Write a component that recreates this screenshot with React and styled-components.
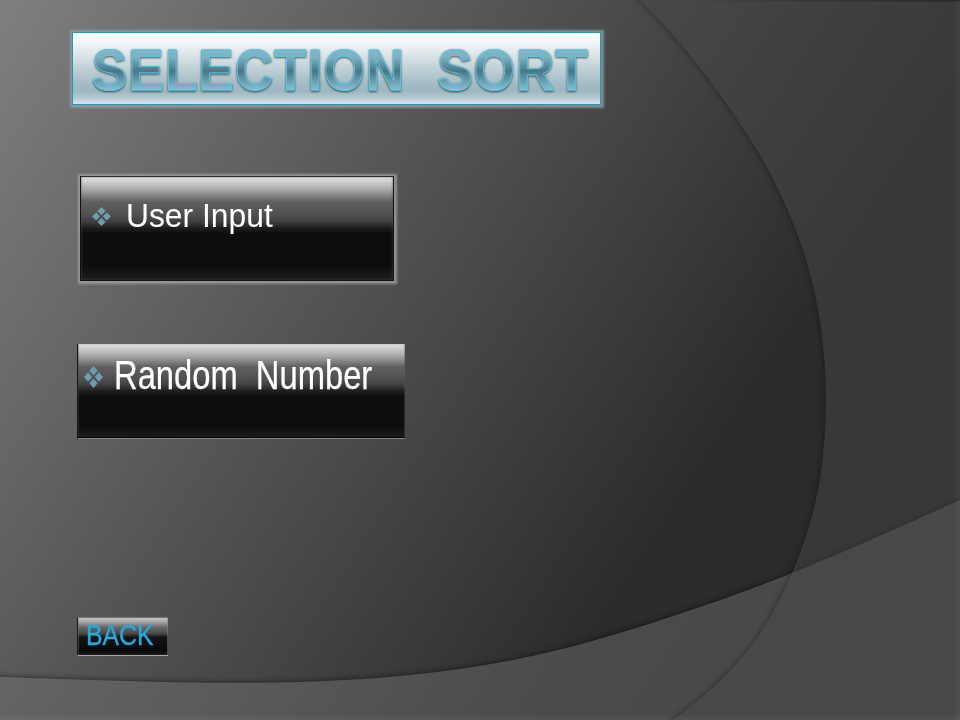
import React from 'react';
import styled, { createGlobalStyle } from 'styled-components';

const GlobalStyle = createGlobalStyle`
  body { margin: 0; background: #2b2b2b; }
`;

const Slide = styled.main`
  position: relative;
  box-sizing: border-box;
  width: 960px;
  height: 720px;
  padding: 32px 0 0 72px;
  overflow: hidden;
  display: flex;
  flex-direction: column;
  align-items: flex-start;
  font-family: 'Liberation Sans', Arial, sans-serif;
  background: linear-gradient(123deg, #7f7f7f 0%, #555555 35%, #2b2b2b 71%, #2a2a2a 100%);
`;

const Backdrop = styled.svg`
  position: absolute;
  inset: 0;
  width: 960px;
  height: 720px;
`;

const TitleBox = styled.header`
  position: relative;
  box-sizing: border-box;
  width: 529px;
  height: 73px;
  padding: 8px 0 0 19px;
  border: 1px solid #1f97be;
  background: linear-gradient(#ffffff 0%, #f6f9fa 10%, #dde6e9 30%, #b9ccd2 55%, #a2bbc4 72%, #9eb8c1 82%, #b4c8cf 91%, #d9e4e8 100%);
  box-shadow: 0 0 2px 2.5px rgba(150, 163, 169, 0.75);
`;

const Title = styled.h1`
  margin: 0;
  width: max-content;
  font-size: 57.3px;
  line-height: 58px;
  font-weight: 700;
  letter-spacing: 1.5px;
  white-space: pre;
  color: transparent;
  transform: scaleX(0.918);
  transform-origin: left;
  background: linear-gradient(#86b5c6 14%, #80afc0 28%, #4a7786 52%, #5e8d9d 62%, #8cbccd 84%);
  background-clip: text;
  -webkit-background-clip: text;
  -webkit-text-stroke: 0.9px #46d0f5;
  filter: drop-shadow(0 1.5px 1px rgba(40, 42, 44, 0.8));
`;

const gloss = `linear-gradient(#dcdcdc 0%, #d6d6d6 3%, #ababab 12%, #606060 24%, #4f4f4f 37%, #404040 43%, #1c1c1c 50%, #0d0d0d 55%, #0d0d0d 87%, #1e1e1e 99%)`;

const GlossButton = styled.button`
  position: relative;
  box-sizing: border-box;
  display: flex;
  align-items: flex-start;
  margin: 0;
  border: 0 solid #111;
  font-family: inherit;
  text-align: left;
  background: ${gloss};
`;

const UserButton = styled(GlossButton)`
  width: 314px;
  height: 105px;
  margin: 71px 0 0 8px;
  padding: 22px 0 0 11px;
  gap: 15px;
  border: 1px solid #111;
  border-top-color: #2c2c2c;
  box-shadow: 0 0 2px 2.5px rgba(165, 165, 165, 0.75), inset 1px 0 2px rgba(90, 90, 90, 0.35), inset -1px 0 2px rgba(90, 90, 90, 0.35);
`;

const RandomButton = styled(GlossButton)`
  width: 328px;
  height: 95px;
  margin: 63px 0 0 5px;
  padding: 11px 0 0 6px;
  gap: 11px;
  border-left: 1px solid #161616;
  box-shadow: inset 0 -2px 0 -1px #858585, inset 0 -3px 0 -1px #050505, inset 1px 0 1px rgba(80, 80, 80, 0.4), inset -1px 0 1px rgba(90, 90, 90, 0.4);
`;

const BackButton = styled(GlossButton)`
  width: 91px;
  height: 39px;
  margin: 178px 0 0 5px;
  padding: 2px 0 0 8px;
  border-left: 1px solid #1a1a1a;
  border-bottom: 1px solid #a8a8a8;
  border-top: 1px solid #777;
  box-shadow: inset 1px 0 1px rgba(120, 120, 120, 0.4), inset -1px 0 0 rgba(130, 130, 130, 0.5);
  background: linear-gradient(#c4c4c4 0%, #a8a8a8 10%, #686868 25%, #484848 42%, #141414 52%, #090909 88%, #1a1a1a 100%);
`;

const Label = styled.span`
  white-space: pre;
  color: ${(p) => p.$color || '#fff'};
  font-size: ${(p) => p.$size}px;
  line-height: ${(p) => p.$line}px;
  transform: scaleX(${(p) => p.$squeeze});
  transform-origin: left;
  -webkit-text-stroke: ${(p) => p.$weight || 0}px currentColor;
`;

const BulletIcon = styled.svg`
  flex: none;
  width: 19px;
  height: ${(p) => p.$height}px;
  margin-top: ${(p) => p.$top}px;
  fill: #6d9eae;
`;

function Bullet({ height, top }) {
  return (
    <BulletIcon $height={height} $top={top} viewBox="0 0 19 19" preserveAspectRatio="none">
      <path d="M9.5 0l4.1 4.1-4.1 4.1-4.1-4.1zM9.5 10.8l4.1 4.1-4.1 4.1-4.1-4.1zM4.1 5.4l4.1 4.1-4.1 4.1L0 9.5zM14.9 5.4L19 9.5l-4.1 4.1-4.1-4.1z" />
    </BulletIcon>
  );
}

// Catmull-Rom spline through the given points, as cubic Bézier segments.
function spline(points) {
  let d = `M${points[0][0]} ${points[0][1]}`;
  for (let i = 0; i < points.length - 1; i += 1) {
    const a = points[i - 1] || points[i];
    const b = points[i];
    const c = points[i + 1];
    const e = points[i + 2] || c;
    d += `C${b[0] + (c[0] - a[0]) / 6} ${b[1] + (c[1] - a[1]) / 6} ${c[0] - (e[0] - b[0]) / 6} ${c[1] - (e[1] - b[1]) / 6} ${c[0]} ${c[1]}`;
  }
  return d;
}

const rightEdge = spline([[606, -36], [640, 0], [671, 33], [701, 69], [731, 110], [760, 155], [778.5, 190], [795, 228], [808.5, 268], [818, 310], [824, 355], [826, 403], [823.5, 450], [818, 490], [807, 533], [792, 573], [776, 606], [759, 635], [736, 664], [708, 692], [673, 719.5], [633, 746]]);
const floorEdge = spline([[-60, 673], [0, 676.7], [77, 679.5], [153, 681.8], [230, 682.8], [306, 681.8], [383, 677.5], [460, 669], [532, 656], [600, 638.7], [667, 618], [733, 595.5], [792, 573], [867, 541.5], [960, 500], [1000, 482]]);
const rightShape = `${rightEdge}L1000 748L1000 -36Z`;
const floorShape = `${floorEdge}L1000 760L-60 760Z`;

export default function App() {
  return (
    <>
      <GlobalStyle />
      <Slide>
        <Backdrop viewBox="0 0 960 720" aria-hidden="true">
          <defs>
            <filter id="edge" filterUnits="userSpaceOnUse" x="-60" y="-60" width="1080" height="840">
              <feGaussianBlur in="SourceAlpha" stdDeviation="3" result="b" />
              <feComposite in="b" in2="SourceAlpha" operator="out" />
            </filter>
            <linearGradient id="rim">
              <stop offset="0" stopColor="#fff" stopOpacity="0" />
              <stop offset="1" stopColor="#fff" stopOpacity="0.05" />
            </linearGradient>
            <linearGradient id="rimBottom" x1="0" y1="0" x2="0" y2="1">
              <stop offset="0" stopColor="#fff" stopOpacity="0" />
              <stop offset="1" stopColor="#fff" stopOpacity="0.05" />
            </linearGradient>
            <linearGradient id="topLine">
              <stop offset="0" stopColor="#1c1c1c" stopOpacity="0" />
              <stop offset="1" stopColor="#1c1c1c" stopOpacity="0.6" />
            </linearGradient>
          </defs>
          <path d={floorShape} filter="url(#edge)" opacity="0.6" />
          <path d={floorShape} fill="#737373" fillOpacity="0.43" />
          <path d={rightShape} filter="url(#edge)" opacity="0.45" />
          <path d={rightShape} fill="#474747" fillOpacity="0.48" />
          <rect x="953" y="0" width="7" height="720" fill="url(#rim)" />
          <rect x="0" y="714" width="960" height="6" fill="url(#rimBottom)" />
          <rect x="680" y="0" width="280" height="1.5" fill="url(#topLine)" />
        </Backdrop>
        <TitleBox>
          <Title>{'SELECTION  SORT'}</Title>
        </TitleBox>
        <UserButton type="button">
          <Bullet height={19} top={8} />
          <Label $size={32.7} $line={34} $squeeze={0.973}>User Input</Label>
        </UserButton>
        <RandomButton type="button">
          <Bullet height={22} top={11} />
          <Label $size={40} $line={40} $squeeze={0.818} $weight={0.25}>{'Random  Number'}</Label>
        </RandomButton>
        <BackButton type="button">
          <Label $size={29.5} $line={30} $squeeze={0.84} $weight={0.4} $color="#25a8e0">BACK</Label>
        </BackButton>
      </Slide>
    </>
  );
}
